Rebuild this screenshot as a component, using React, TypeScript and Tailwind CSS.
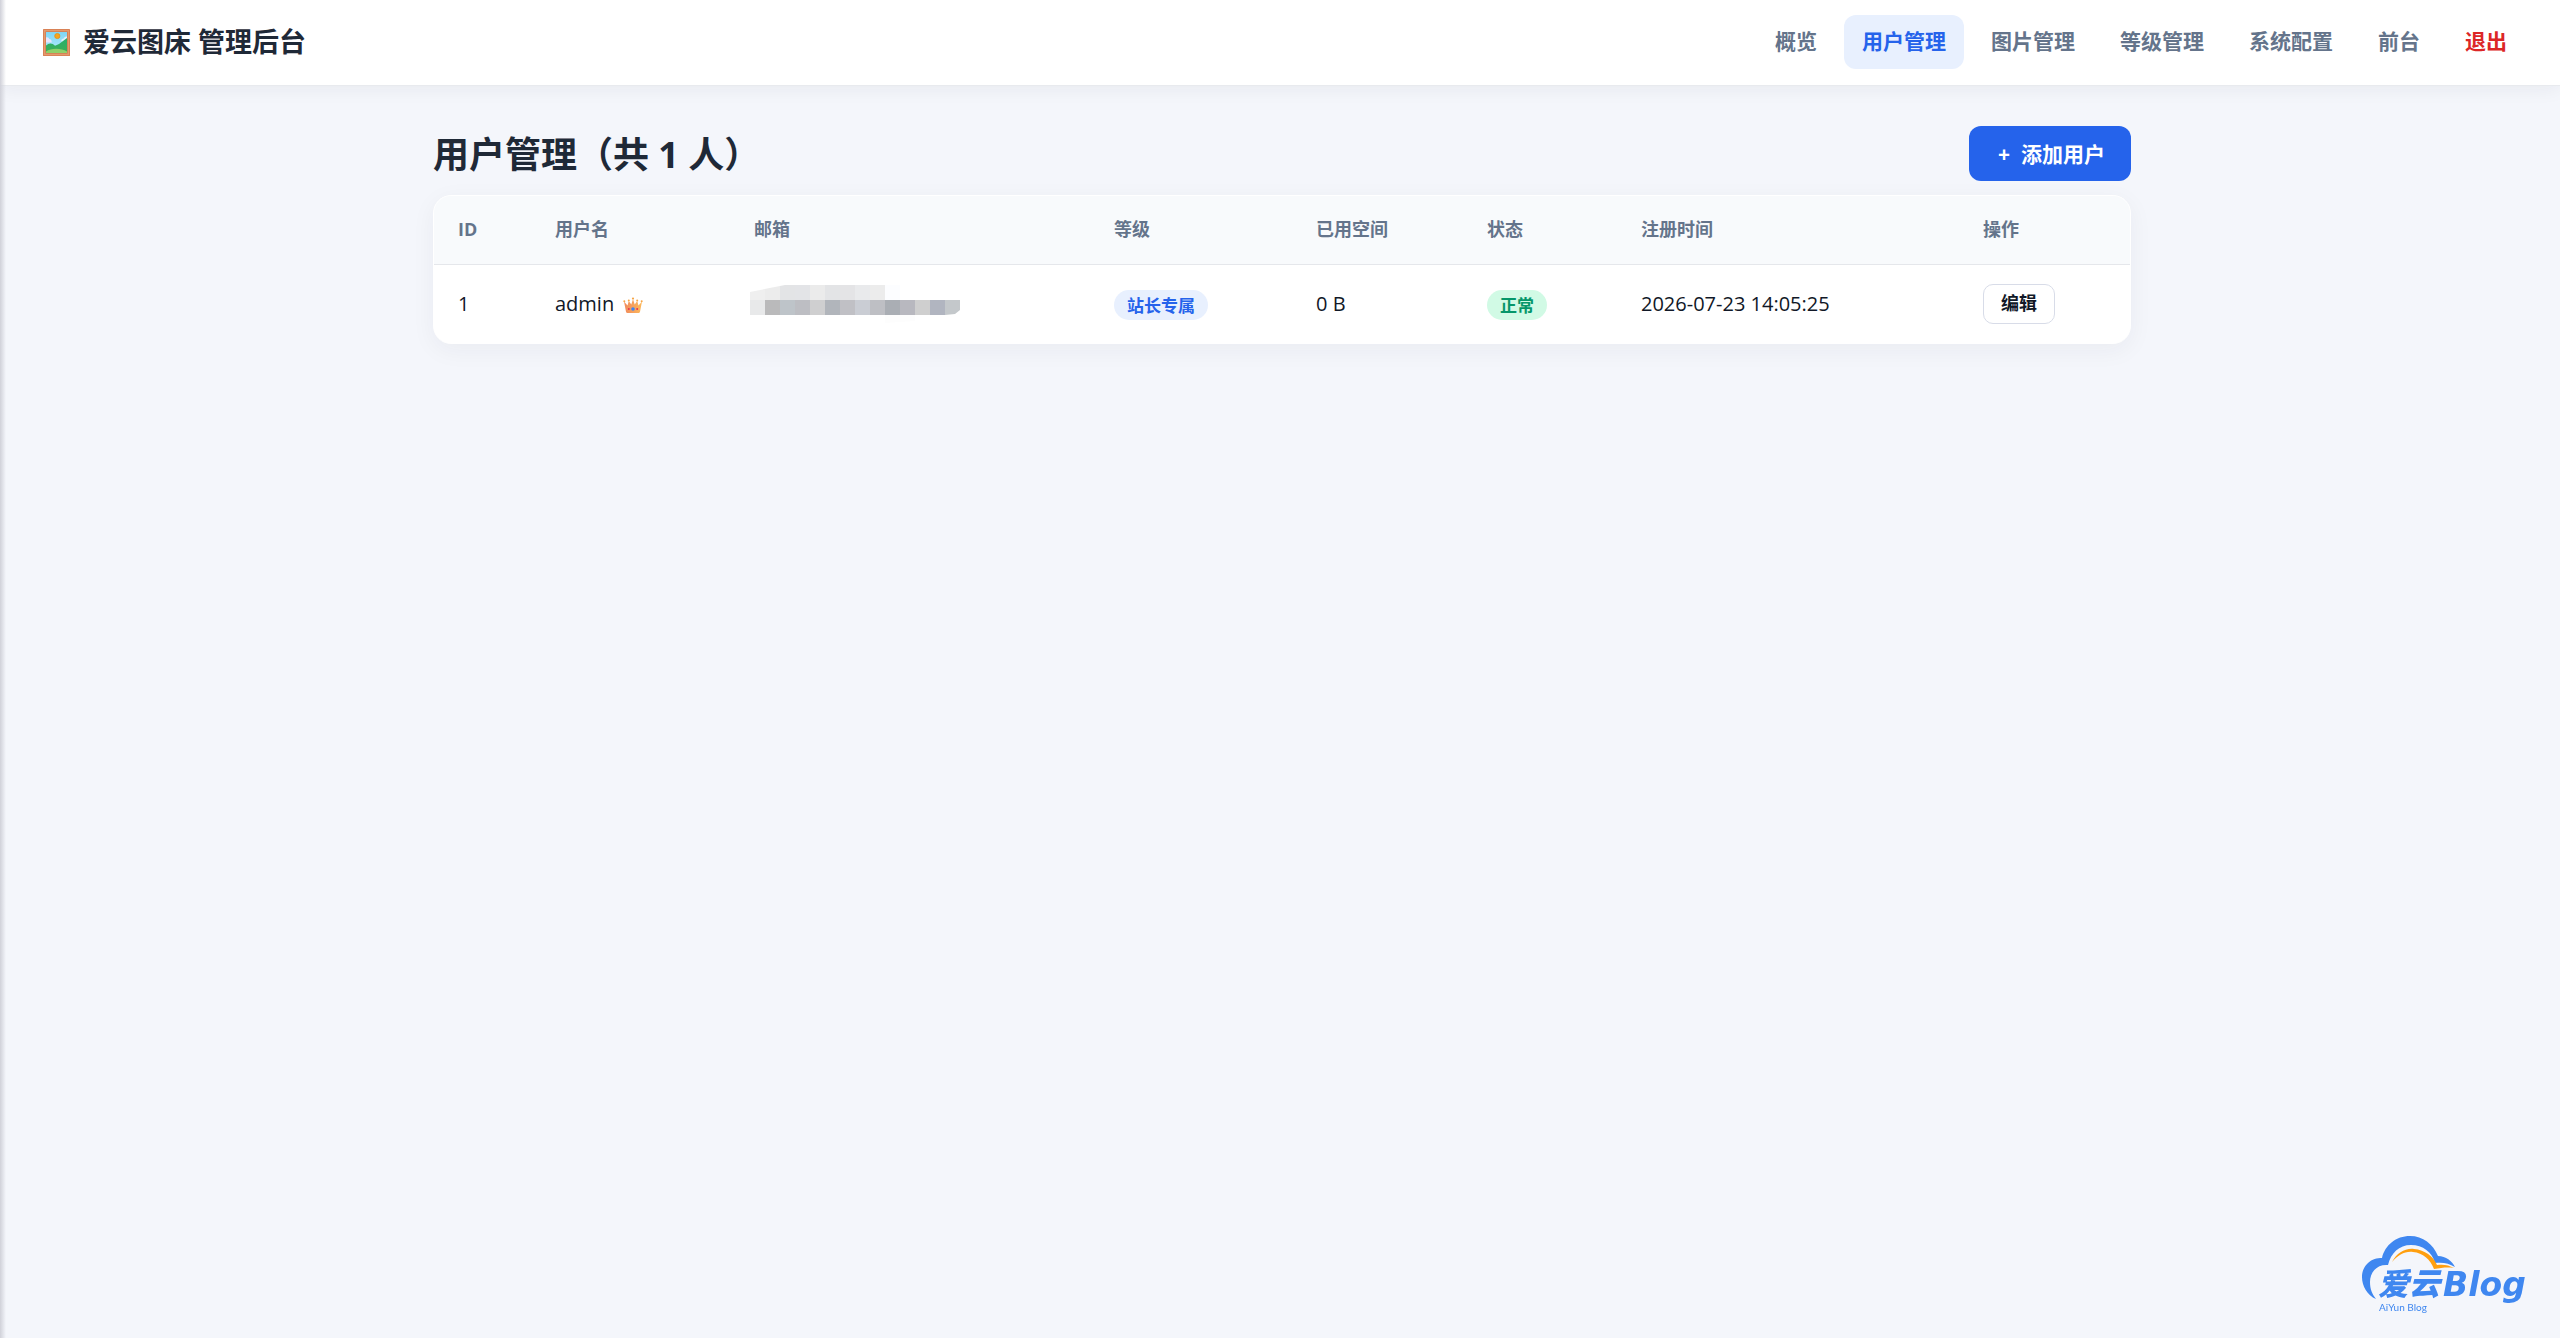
import type { ReactNode } from 'react'

const NAV_ITEMS = [
  { label: '概览', href: '#overview' },
  { label: '用户管理', href: '#users', active: true },
  { label: '图片管理', href: '#images' },
  { label: '等级管理', href: '#levels' },
  { label: '系统配置', href: '#settings' },
  { label: '前台', href: '#front' },
  { label: '退出', href: '#logout', danger: true },
]

const COLUMNS = [
  { label: 'ID', width: 'w-[97px]' },
  { label: '用户名', width: 'w-[199px]' },
  { label: '邮箱', width: 'w-[360px]' },
  { label: '等级', width: 'w-[202px]' },
  { label: '已用空间', width: 'w-[171px]' },
  { label: '状态', width: 'w-[154px]' },
  { label: '注册时间', width: 'w-[342px]' },
  { label: '操作', width: 'w-[171px]' },
]

function PictureIcon() {
  return (
    <svg viewBox="0 0 27 27" className="size-[27px] shrink-0" aria-hidden="true">
      <defs>
        <linearGradient id="sky" x1="0" y1="0" x2="0" y2="1">
          <stop offset="0" stopColor="#7fd6f5" />
          <stop offset="1" stopColor="#b5ecfb" />
        </linearGradient>
        <linearGradient id="hill" x1="0" y1="0" x2="0" y2="1">
          <stop offset="0" stopColor="#27b06c" />
          <stop offset="1" stopColor="#3fae55" />
        </linearGradient>
      </defs>
      <rect width="27" height="27" rx="0.6" fill="#d98256" />
      <rect x="1" y="1" width="25" height="25" fill="#e59a6c" />
      <rect x="2.4" y="2.4" width="22.2" height="22.2" fill="#c9744b" />
      <rect x="3" y="3" width="21" height="21" fill="url(#sky)" />
      <path d="M3 8.5c2-.6 3 .6 3.3 1.6 1.7.2 2.5 1.3 2.4 3.4H3z" fill="#e9e3fb" />
      <path d="M24 7.5c-2-.2-2.9.9-3.2 2-1.6.1-2.3 1-2.6 2.2L20 14h4z" fill="#dff1fd" />
      <circle cx="14.3" cy="7" r="2.6" fill="#f6a51c" stroke="#e08a12" strokeWidth="0.7" />
      <path d="M3 16.5c3-2.800 6-2.800 9 .2L16 15l8-6v15H3z" fill="url(#hill)" />
      <path d="M3 22.5c5-3.600 15-3.800 21 0V24H3z" fill="#8fd06a" />
    </svg>
  )
}

function CrownIcon() {
  return (
    <svg viewBox="0 0 20 17" className="mt-1 h-[17px] w-5" aria-hidden="true">
      <defs>
        <linearGradient id="crown" x1="0" y1="0" x2="1" y2="0">
          <stop offset="0" stopColor="#f08a5d" />
          <stop offset="1" stopColor="#fdb95b" />
        </linearGradient>
      </defs>
      <path d="M1 4.500L4.500 8.500L5.800 4L8.300 7.500L10 2L11.700 7.500L14.200 4L15.500 8.500L19 4.500L17 14.800C16.900 15.500 16.500 16 15.800 16H4.200C3.500 16 3.100 15.500 3 14.800z" fill="url(#crown)" />
      <g fill="#f6a545">
        <circle cx="1.3" cy="4.2" r="1" />
        <circle cx="5.8" cy="3.4" r="1" />
        <circle cx="10" cy="1.5" r="1.1" />
        <circle cx="14.2" cy="3.4" r="1" />
        <circle cx="18.7" cy="4.2" r="1" />
      </g>
      <circle cx="10" cy="12" r="1.8" fill="#3f83f0" />
      <circle cx="5.8" cy="12" r="1" fill="#e8304f" />
      <circle cx="14.2" cy="12" r="1" fill="#e8304f" />
    </svg>
  )
}

// Blocks that hide the mail address
const MOSAIC_TOP = ['#efefef', '#ececec', '#e3e4e6', '#e3e4e7', '#ebebeb', '#e3e4e6', '#e4e4e6', '#e9eaec', '#ececec', '#fcfdff']
const MOSAIC_BOTTOM = ['#e8e9ea', '#bababb', '#bec4c9', '#bdbec3', '#cfcfd0', '#b1b5bb', '#c0c0c5', '#cacdd4', '#bebfc4', '#aaaeb4', '#b8b8bf', '#cfcfcf', '#b1b5c0', '#c4c8cb']

function MaskedEmail() {
  return (
    <svg viewBox="0 0 210 38" className="-ml-1 h-[38px] w-[210px]" role="img" aria-label="邮箱已隐藏" shapeRendering="crispEdges">
      <clipPath id="mask-shape">
        <path d="M0 7L35 0H210V25L205 29L195 30L165 36L135 38V30H0z" />
      </clipPath>
      <g clipPath="url(#mask-shape)">
        {MOSAIC_TOP.map((fill, i) => (
          <rect key={i} x={i * 15} y="0" width="15" height="15" fill={fill} />
        ))}
        {MOSAIC_BOTTOM.map((fill, i) => (
          <rect key={i} x={i * 15} y="15" width="15" height="15" fill={fill} />
        ))}
        <rect x="135" y="30" width="30" height="8" fill="#fdfdfd" />
      </g>
    </svg>
  )
}

function BlogLogo() {
  return (
    <svg viewBox="0 0 172 80" className="h-20 w-[172px]" role="img" aria-label="爱云Blog">
      <path d="M16 63C2 57-3 37 8 27C12 23 17 22 22 22C25 9 36 0 50 0C63 0 73 8 78 20C86 20 92 25 95 31C89 27 82 26 75 27C72 16 63 9 51 9C39 9 31 17 28 29C17 28 10 36 10 46C10 53 12 58 16 63z" fill="#3f87f0" />
      <path d="M32 26C37 17 45 12 54 13C65 14 73 20 77 29C83 28 89 29 94 32C87 31 81 32 74 33C70 23 63 17 53 16C45 15 38 19 32 26z" fill="#ff9f0f" />
      <g fill="#3f87f0">
        <text x="18" y="59" className="font-['Liberation_Sans','Noto_Sans_CJK_SC',sans-serif] text-[31px] font-black italic">爱云</text>
        <text x="83" y="60" className="font-['DejaVu_Sans',sans-serif] text-[33px] font-bold italic">Blog</text>
        <text x="19" y="75" className="font-['Lato',sans-serif] text-[10px]">AiYun Blog</text>
      </g>
    </svg>
  )
}

function Badge({ tone, children }: { tone: 'blue' | 'green'; children: ReactNode }) {
  const colors = tone === 'blue' ? 'bg-[#e8f0fe] text-[#2563eb]' : 'bg-[#d1fae5] text-[#059669]'
  return <span className={`mt-[3px] inline-flex h-[30px] items-center rounded-full px-[13px] pt-[2px] text-[17px] font-bold ${colors}`}>{children}</span>
}

function Header() {
  return (
    <header className="flex min-h-[86px] items-center justify-between border-b border-[#e8eaee] bg-white pr-[35px] pb-px pl-[43px] shadow-[0_3px_18px_rgba(31,41,55,0.06)]">
      <div className="flex items-center gap-[13px] text-[27px] font-bold">
        <PictureIcon />
        <span>爱云图床 管理后台</span>
      </div>
      <nav className="flex items-center gap-[9px] text-[21px] font-bold">
        {NAV_ITEMS.map((item) => (
          <a
            key={item.label}
            href={item.href}
            className={`flex h-[54px] items-center rounded-xl px-[18px] ${
              item.active ? 'bg-[#e8f0fe] text-[#2563eb]' : item.danger ? 'text-[#dc2626]' : 'text-[#64748b]'
            }`}
          >
            {item.label}
          </a>
        ))}
      </nav>
    </header>
  )
}

export default function App() {
  return (
    <div className="relative min-h-screen w-full bg-[#f4f6fb] font-['Open_Sans','Noto_Sans_CJK_SC',sans-serif] text-[#1f2937]">
      <Header />
      <main className="mx-auto max-w-[1702px] pt-10 pl-1">
        <div className="mb-[14px] flex items-center justify-between">
          <h1 className="pt-[2px] text-[36px] leading-[53px] font-bold">用户管理（共 1 人）</h1>
          <button type="button" className="flex h-[55px] items-center gap-[11px] rounded-xl bg-[#2563eb] pt-[2px] pr-[26px] pl-[29px] text-[21px] font-bold text-white">
            <span>+</span>
            添加用户
          </button>
        </div>
        <div className="overflow-hidden rounded-[18px] border border-white bg-white shadow-[0_6px_24px_rgba(31,41,55,0.05)]">
          <table className="w-full table-fixed text-left text-[20px]">
            <thead>
              <tr className="h-[68px] border-b border-[#e5e7eb] bg-[#f8fafc] text-[18px] text-[#64748b]">
                {COLUMNS.map((column) => (
                  <th key={column.label} scope="col" className={`${column.width} px-6 font-bold`}>
                    {column.label}
                  </th>
                ))}
              </tr>
            </thead>
            <tbody>
              <tr className="h-[79px] text-[#111827]">
                <td className="px-6">1</td>
                <td className="px-6">
                  <span className="flex items-center gap-[9px]">
                    admin
                    <CrownIcon />
                  </span>
                </td>
                <td className="px-6">
                  <MaskedEmail />
                </td>
                <td className="px-6">
                  <Badge tone="blue">站长专属</Badge>
                </td>
                <td className="px-6">0 B</td>
                <td className="px-6">
                  <Badge tone="green">正常</Badge>
                </td>
                <td className="px-6">2026-07-23 14:05:25</td>
                <td className="px-6">
                  <button type="button" className="flex h-10 items-center rounded-[10px] border border-[#d8dce8] bg-white px-[17px] text-[18px] font-bold">
                    编辑
                  </button>
                </td>
              </tr>
            </tbody>
          </table>
        </div>
      </main>
      <a href="#blog" className="fixed right-7 bottom-[22px]">
        <BlogLogo />
      </a>
      <div className="pointer-events-none absolute inset-y-0 left-0 w-[6px] bg-linear-to-r from-[#d0d1d9] to-transparent" />
    </div>
  )
}
